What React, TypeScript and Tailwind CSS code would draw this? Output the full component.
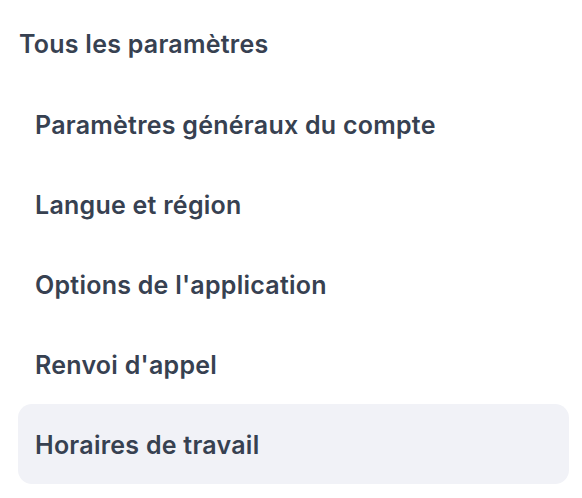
import React from "react";

const items = [
  "Paramètres généraux du compte",
  "Langue et région",
  "Options de l'application",
  "Renvoi d'appel",
  "Horaires de travail",
];

export default function App() {
  const active = "Horaires de travail";
  return (
    <div
      className="min-h-[498px] bg-white pl-[18px] pr-[13px] text-[#374151]"
      style={{ fontFamily: "Inter, 'Noto Sans', sans-serif" }}
    >
      <h1 className="flex h-[84px] items-center pl-px pt-[6px] text-[25px] font-semibold tracking-[0.01em]">
        Tous les paramètres
      </h1>
      <ul className="flex flex-col">
        {items.map((item) => (
          <li
            key={item}
            className={
              "flex h-20 items-center rounded-[14px] px-[17px] pt-[3px] text-[25px] font-semibold tracking-[0.01em] " +
              (item === active ? "bg-[#f1f2f7]" : "")
            }
          >
            {item}
          </li>
        ))}
      </ul>
    </div>
  );
}
